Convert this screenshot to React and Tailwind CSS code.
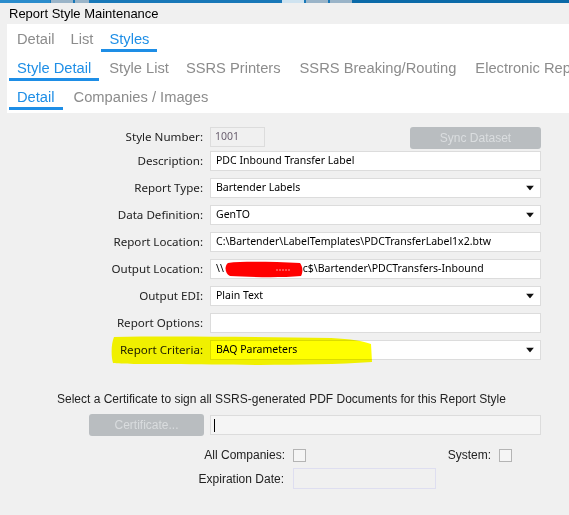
import React from 'react';

const labelFont = { fontFamily: '"Noto Sans", "Open Sans", sans-serif' };

const DropArrow = () => (
  <svg width="8" height="5" viewBox="0 0 8 5" className="absolute right-[6px] top-1/2 -translate-y-1/2">
    <path d="M0 0 L8 0 L4 5 Z" fill="#111" />
  </svg>
);

const FieldRow = ({ label, value, dropdown, children }) => (
  <div className="flex items-center h-[20px]">
    <div className="w-[204px] text-right text-[11.6px] text-[#222] leading-none pr-[1px]" style={labelFont}>
      {label}
    </div>
    <div className="relative ml-[6px] w-[331px] h-[20px] bg-white border border-[#dcdcdc] flex items-center pl-[5px] text-[10.5px] text-black whitespace-nowrap" style={labelFont}>
      {children || value}
      {dropdown && <DropArrow />}
    </div>
  </div>
);

export default function App() {
  return (
    <div className="w-[569px] h-[515px] bg-[#f0f0f0] overflow-hidden relative font-['Liberation_Sans',Arial,sans-serif]">
      {/* top strip */}
      <div className="flex h-[3px] bg-[#1878b8]">
        <div className="w-[50px] bg-[#2a8ccc]" />
        <div className="w-[22px] bg-[#9ab4c8] ml-[1px]" />
        <div className="w-[14px] bg-[#9ab4c8] ml-[2px]" />
        <div className="w-[193px]" />
        <div className="w-[22px] bg-[#cfe3f0]" />
        <div className="w-[22px] bg-[#9ab4c8] ml-[2px]" />
        <div className="w-[22px] bg-[#9ab4c8] ml-[2px]" />
        <div className="flex-1 bg-[#0b6aa8]" />
      </div>

      <div className="h-[21px] flex items-center pt-[1px] pl-[9px] text-[13px] text-black">Report Style Maintenance</div>

      {/* tabs panel */}
      <div className="ml-[7px] h-[89px] bg-white text-[14.7px] leading-[20px] text-[#8c8c8c] overflow-hidden">
        <div className="flex h-[28px] items-end whitespace-nowrap">
          <span className="ml-[10px] pb-[3px]">Detail</span>
          <span className="ml-[16px] pb-[3px]">List</span>
          <span className="ml-[8px] px-[8px] text-[#1e8ee6] border-b-[3px] border-[#1e8ee6]">Styles</span>
        </div>
        <div className="flex h-[29px] items-end whitespace-nowrap">
          <span className="ml-[2px] px-[8px] text-[#1e8ee6] border-b-[3px] border-[#1e8ee6]">Style Detail</span>
          <span className="ml-[10px] pb-[3px]">Style List</span>
          <span className="ml-[17px] pb-[3px]">SSRS Printers</span>
          <span className="ml-[19px] pb-[3px]">SSRS Breaking/Routing</span>
          <span className="ml-[19px] pb-[3px]">Electronic Rep</span>
        </div>
        <div className="flex h-[29px] items-end whitespace-nowrap">
          <span className="ml-[2px] px-[8px] text-[#1e8ee6] border-b-[3px] border-[#1e8ee6]">Detail</span>
          <span className="ml-[11px] pb-[3px]">Companies / Images</span>
        </div>
      </div>

      {/* form */}
      <div className="pt-[14px]">
        <div className="flex items-start h-[22px]">
          <div className="w-[204px] h-[20px] flex items-center justify-end text-[11.6px] text-[#222] pr-[1px]" style={labelFont}>
            Style Number:
          </div>
          <div className="ml-[6px] w-[55px] h-[20px] bg-[#f0f0f0] border border-[#dcdcdc] flex items-center pl-[4px] text-[10.5px] text-[#6b6070]" style={labelFont}>
            1001
          </div>
          <button className="ml-[145px] w-[131px] h-[22px] rounded-[3px] bg-[#b9bdc0] text-[12px] text-[#dadddf]">
            Sync Dataset
          </button>
        </div>

        <div className="mt-[2px] flex flex-col gap-[7px]">
          <FieldRow label="Description:" value="PDC Inbound Transfer Label" />
          <FieldRow label="Report Type:" value="Bartender Labels" dropdown />
          <FieldRow label="Data Definition:" value="GenTO" dropdown />
          <FieldRow label="Report Location:" value={'C:\\Bartender\\LabelTemplates\\PDCTransferLabel1x2.btw'} />
          <FieldRow label="Output Location:">
            <span>{'\\\\'}</span>
            <svg width="79" height="17" viewBox="0 0 79 17" className="shrink-0">
              <path d="M4 2 C20 0 50 1 76 2 C79 6 79 11 77 15 C55 17 25 16 6 15 C1 13 0 5 4 2 Z" fill="#ff0000" />
              <path d="M52 9 L66 9" stroke="#ff9a9a" strokeWidth="1" strokeDasharray="2 1" />
            </svg>
            <span>{'c$\\Bartender\\PDCTransfers-Inbound'}</span>
          </FieldRow>
          <FieldRow label="Output EDI:" value="Plain Text" dropdown />
          <FieldRow label="Report Options:" value="" />
          <div className="relative">
            <FieldRow label="Report Criteria:" value="BAQ Parameters" dropdown />
            {/* marker highlight */}
            <svg width="262" height="32" viewBox="0 0 262 32" className="absolute left-[111px] top-[-4px] mix-blend-multiply pointer-events-none">
              <path d="M3 1 C60 0 150 1 220 2 C240 3 252 5 260 8 L261 26 C200 30 120 29 60 28 C30 28 10 28 2 27 C0 20 0 8 3 1 Z" fill="#ffff00" />
            </svg>
          </div>
        </div>

        {/* certificate */}
        <div className="mt-[31px] pl-[57px] text-[12px] text-[#222] leading-[16px] whitespace-nowrap">
          Select a Certificate to sign all SSRS-generated PDF Documents for this Report Style
        </div>
        <div className="mt-[7px] flex items-center">
          <button className="ml-[89px] w-[115px] h-[22px] rounded-[3px] bg-[#b9bdc0] text-[12px] text-[#d9dcde]">
            Certificate...
          </button>
          <div className="ml-[6px] w-[331px] h-[20px] bg-[#f5f5f5] border border-[#dcdcdc] flex items-center pl-[3px]">
            <div className="w-px h-[13px] bg-black" />
          </div>
        </div>

        <div className="mt-[11px] flex items-center w-[512px] h-[16px] text-[12px] text-[#222]">
          <div className="w-[285px] text-right">All Companies:</div>
          <div className="ml-[8px] w-[13px] h-[13px] border border-[#b4b4b4] bg-[#f5f5f5]" />
          <div className="ml-auto">System:</div>
          <div className="ml-[8px] w-[13px] h-[13px] border border-[#b4b4b4] bg-[#f5f5f5]" />
        </div>

        <div className="mt-[5px] flex items-center text-[12px] text-[#222]">
          <div className="w-[284px] text-right">Expiration Date:</div>
          <div className="ml-[9px] w-[143px] h-[21px] bg-[#f0f0f0] border border-[#dedef0]" />
        </div>
      </div>
    </div>
  );
}
